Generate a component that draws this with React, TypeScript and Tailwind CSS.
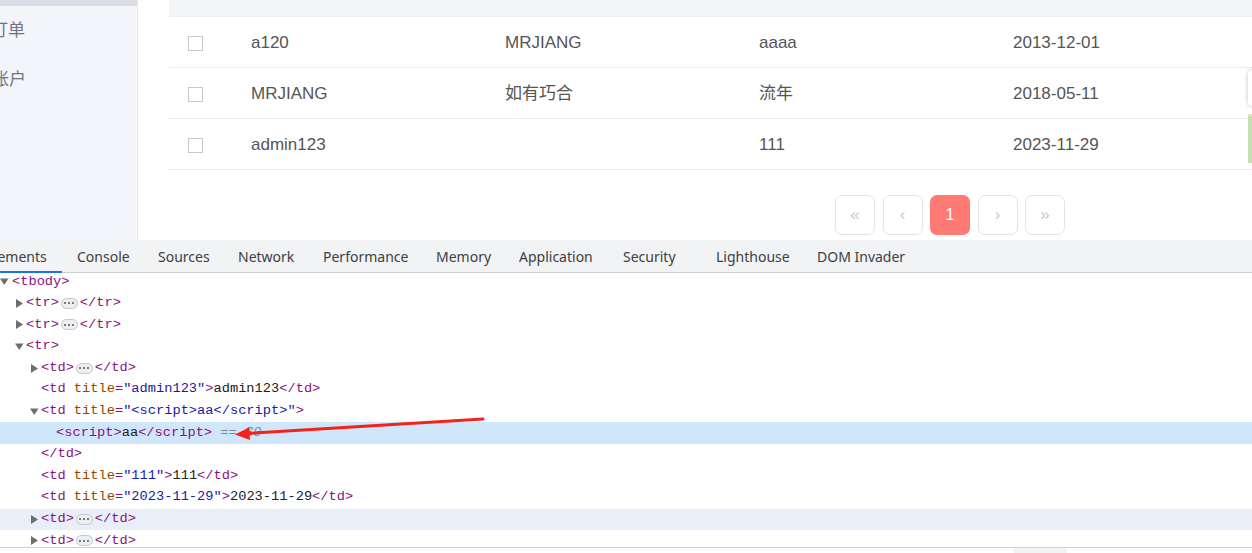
import React from "react";

const rows = [
  { a: "a120", b: "MRJIANG", c: "aaaa", d: "2013-12-01" },
  { a: "MRJIANG", b: "如有巧合", c: "流年", d: "2018-05-11" },
  { a: "admin123", b: "", c: "111", d: "2023-11-29" },
];

const tabs = [
  { name: "Elements", w: "w-[91px]", ml: "ml-[-28px]" },
  { name: "Console", w: "w-[81px]" },
  { name: "Sources", w: "w-[80px]" },
  { name: "Network", w: "w-[85px]" },
  { name: "Performance", w: "w-[113px]" },
  { name: "Memory", w: "w-[83px]" },
  { name: "Application", w: "w-[104px]" },
  { name: "Security", w: "w-[93px]" },
  { name: "Lighthouse", w: "w-[101px]" },
  { name: "DOM Invader", w: "w-[120px]" },
];

const cjk = "font-['Liberation_Sans','Noto_Sans_CJK_SC',sans-serif]";

function Tri({ open }: { open?: boolean }) {
  return (
    <svg width="9" height="9" viewBox="0 0 9 9" className="shrink-0">
      {open ? <path d="M0 1.5h8.5L4.25 8z" fill="#6e6e6e" /> : <path d="M1 0v9l7-4.5z" fill="#6e6e6e" />}
    </svg>
  );
}

function Dots() {
  return (
    <span className="mx-[2px] inline-flex h-[11px] w-[17px] items-center justify-center gap-[2px] rounded-full border border-[#c4c7ca] bg-[#eceef1]">
      <span className="h-[2px] w-[2px] rounded-full bg-[#555]" />
      <span className="h-[2px] w-[2px] rounded-full bg-[#555]" />
      <span className="h-[2px] w-[2px] rounded-full bg-[#555]" />
    </span>
  );
}

const T = ({ children }: { children: React.ReactNode }) => <span className="text-[#881280]">{children}</span>;
const A = ({ children }: { children: React.ReactNode }) => <span className="text-[#994500]">{children}</span>;
const V = ({ children }: { children: React.ReactNode }) => <span className="text-[#1a1aa6]">{children}</span>;

function Line({ level, tri, bg, children }: { level: number; tri?: "open" | "closed"; bg?: string; children: React.ReactNode }) {
  const pad = ["pl-0", "pl-[15px]", "pl-[30px]", "pl-[45px]"][level];
  return (
    <div className={"flex h-[21.6px] items-center " + pad + " " + (bg ?? "")}>
      <span className={"flex items-center " + (level === 0 ? "w-[12px]" : "w-[11px]")}>
        {tri && <Tri open={tri === "open"} />}
      </span>
      <span className="flex items-center whitespace-pre">{children}</span>
    </div>
  );
}

export default function App() {
  return (
    <div className="relative h-[553px] w-[1252px] overflow-hidden bg-white">
      {/* page */}
      <div className="flex h-[240px]">
        <div className={"w-[138px] shrink-0 border-r border-[#e6e7ef] bg-[#f4f5fa] " + cjk}>
          <div className="h-[6px] bg-[#dcdde9]" />
          <div className="ml-[-9px] mt-[12px] text-[17px] text-[#6f7385]">订单</div>
          <div className="ml-[-8px] mt-[23px] text-[17px] text-[#6f7385]">账户</div>
        </div>
        <div className={"relative flex-1 pl-[31px] " + cjk}>
          <div className="h-[17px] border-b border-[#eceef2] bg-[#f4f5f9]" />
          {rows.map((r, i) => (
            <div key={i} className="grid h-[51px] grid-cols-[82px_254px_254px_254px_1fr] items-center border-b border-[#ebebeb] pt-[2px] text-[17px] text-[#555]">
              <div className="pl-[19px]">
                <div className="h-[15px] w-[15px] border border-[#c9c9c9] bg-white" />
              </div>
              <div>{r.a}</div>
              <div>{r.b}</div>
              <div>{r.c}</div>
              <div>{r.d}</div>
            </div>
          ))}
          <div className="mt-[25px] flex gap-[7.5px] pl-[666px]">
            {["«", "‹", "1", "›", "»"].map((p) => (
              <div
                key={p}
                className={
                  "flex h-[40px] w-[40px] items-center justify-center rounded-[7px] text-[17px] " +
                  (p === "1" ? "bg-[#fe7a73] text-white" : "border border-[#e3e3e3] text-[#c8c8c8]")
                }
              >
                {p}
              </div>
            ))}
          </div>
          <div className="absolute right-[-6px] top-[70px] h-[36px] w-[10px] rounded-[4px] bg-white shadow-[0_0_4px_rgba(0,0,0,0.25)]" />
          <div className="absolute right-0 top-[114px] h-[49px] w-[4px] border-t-2 border-[#f2e2b4] bg-[#c6dfb5]" />
        </div>
      </div>

      {/* devtools tab bar */}
      <div className="flex h-[33px] items-stretch border-b border-[#cbcdd1] bg-[#f1f3f4] font-['Noto_Sans',sans-serif] text-[14px] text-[#3c4043]">
        {tabs.map((t, i) => (
          <div key={t.name} className={"relative flex shrink-0 items-center pl-[14px] " + t.w + " " + (t.ml ?? "")}>
            {t.name}
            {i === 0 && <div className="absolute bottom-[-1px] left-[28px] right-[1px] h-[2px] bg-[#1a73e8]" />}
          </div>
        ))}
      </div>

      {/* elements tree */}
      <div className="h-[274px] overflow-hidden font-['Liberation_Mono',monospace] text-[13.7px] text-[#222]">
        <div className="mt-[-2px]">
          <Line level={0} tri="open"><T>{"<tbody>"}</T></Line>
          <Line level={1} tri="closed"><T>{"<tr>"}</T><Dots /><T>{"</tr>"}</T></Line>
          <Line level={1} tri="closed"><T>{"<tr>"}</T><Dots /><T>{"</tr>"}</T></Line>
          <Line level={1} tri="open"><T>{"<tr>"}</T></Line>
          <Line level={2} tri="closed"><T>{"<td>"}</T><Dots /><T>{"</td>"}</T></Line>
          <Line level={2}>
            <T>{"<td "}</T><A>title</A><T>=</T><V>"admin123"</V><T>{">"}</T>admin123<T>{"</td>"}</T>
          </Line>
          <Line level={2} tri="open">
            <T>{"<td "}</T><A>title</A><T>=</T><V>{'"<script>aa</script>"'}</V><T>{">"}</T>
          </Line>
          <Line level={3} bg="bg-[#cfe6fb]">
            <T>{"<script>"}</T>aa<T>{"</script>"}</T>
            <span className="italic text-[#80868b]">{" == $0"}</span>
          </Line>
          <Line level={2}><T>{"</td>"}</T></Line>
          <Line level={2}>
            <T>{"<td "}</T><A>title</A><T>=</T><V>"111"</V><T>{">"}</T>111<T>{"</td>"}</T>
          </Line>
          <Line level={2}>
            <T>{"<td "}</T><A>title</A><T>=</T><V>"2023-11-29"</V><T>{">"}</T>2023-11-29<T>{"</td>"}</T>
          </Line>
          <Line level={2} tri="closed" bg="bg-[#e9eff8]"><T>{"<td>"}</T><Dots /><T>{"</td>"}</T></Line>
          <Line level={2} tri="closed"><T>{"<td>"}</T><Dots /><T>{"</td>"}</T></Line>
        </div>
      </div>
      <div className="flex h-[6px] border-t border-[#cacdd1]">
        <div className="ml-[1014px] w-[53px] bg-[#f1f3f4]" />
      </div>

      {/* red annotation arrow */}
      <svg className="pointer-events-none absolute left-0 top-0" width="1252" height="553">
        <line x1="483" y1="419" x2="246" y2="433.5" stroke="#f5221b" strokeWidth="3" strokeLinecap="round" />
        <polygon points="235,434.5 249,427.5 250,440" fill="#f5221b" />
      </svg>
    </div>
  );
}
